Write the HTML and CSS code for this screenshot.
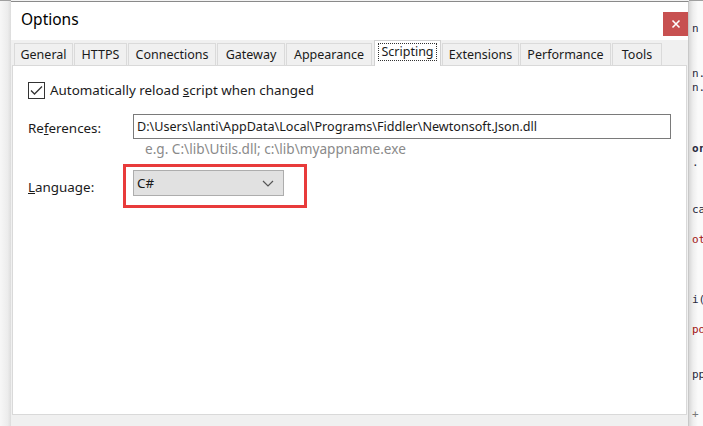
FILE: index.html
```html
<!DOCTYPE html>
<html>
<head>
<meta charset="utf-8">
<link rel="stylesheet" href="styles.css">
</head>
<body>
<div class="desktop">
  <div class="lshadow"></div>
  <div class="dialog">
    <div class="titlebar">
      <span class="title">Options</span>
      <div class="close"><svg width="10" height="10" viewBox="0 0 10 10"><path d="M1.5 1.5 L8.5 8.5 M8.5 1.5 L1.5 8.5" stroke="#fff" stroke-width="1.6"/></svg></div>
    </div>
    <div class="tabs">
      <div class="tab w-general">General</div>
      <div class="tab w-https">HTTPS</div>
      <div class="tab w-conn">Connections</div>
      <div class="tab w-gate">Gateway</div>
      <div class="tab w-app">Appearance</div>
      <div class="tab active w-script"><span class="focus">Scripting</span></div>
      <div class="tab w-ext">Extensions</div>
      <div class="tab w-perf">Performance</div>
      <div class="tab w-tools">Tools</div>
    </div>
    <div class="panel">
      <div class="check-row">
        <span class="checkbox"><svg width="13" height="11" viewBox="0 0 13 11"><path d="M1 5.5 L4.5 9 L12 1.5" fill="none" stroke="#333" stroke-width="1.3"/></svg></span>
        <span>Automatically reload <u>s</u>cript when changed</span>
      </div>
      <div class="field-row refs">
        <span class="label">Re<u>f</u>erences:</span>
        <div class="input">D:\Users\lanti\AppData\Local\Programs\Fiddler\Newtonsoft.Json.dll</div>
      </div>
      <div class="hint">e.g. C:\lib\Utils.dll; c:\lib\myappname.exe</div>
      <div class="field-row lang">
        <span class="label"><u>L</u>anguage:</span>
        <div class="select-wrap">
          <div class="select"><span>C#</span><svg width="12" height="7" viewBox="0 0 12 7"><path d="M1 1 L6 6 L11 1" fill="none" stroke="#555" stroke-width="1.2"/></svg></div>
        </div>
      </div>
    </div>
    <div class="footer"></div>
  </div>
  <div class="behind">
    <div class="frag f1"><span class="dk">n</span> <span class="red">=</span></div>
    <div class="frag f2 dk">n. U</div>
    <div class="frag f3 dk">n. U</div>
    <div class="frag f4 dk bold">or</div>
    <div class="frag f5 dk">. S</div>
    <div class="frag f6 dk">ca</div>
    <div class="frag f7 red">ot</div>
    <div class="frag f8 dk">i(</div>
    <div class="frag f9 red">po</div>
    <div class="frag f10 dk">pp</div>
    <div class="frag f11 gray">+</div>
  </div>
</div>
</body>
</html>
```

FILE: styles.css
```css
* { box-sizing: border-box; }
html, body { margin: 0; padding: 0; }
body {
  width: 703px;
  height: 426px;
  overflow: hidden;
  background: #f3f3f3;
  font-family: "Noto Sans", "Segoe UI", sans-serif;
  font-size: 12px;
  color: #1a1a1a;
}
.desktop {
  display: flex;
  height: 426px;
}
.lshadow {
  width: 11px;
  flex: none;
  background: linear-gradient(to right, #f7f7f7, #ececec 70%, #dcdcdc);
  border-top: 1px solid #a0a0a0;
}
.dialog {
  width: 678px;
  flex: none;
  display: flex;
  flex-direction: column;
  background: #f0f0f0;
  border-top: 1px solid #8a8a8a;
  margin-top: 1px;
  border-right: 1px solid #c8c8c8;
}
.titlebar {
  height: 38px;
  background: #fff;
  display: flex;
  align-items: center;
  justify-content: space-between;
  padding-left: 10px;
  padding-right: 0;
}
.title {
  font-size: 15.5px;
  color: #000;
  margin-top: -4px;
}
.close {
  width: 25px;
  height: 24px;
  background: #c75050;
  display: flex;
  align-items: center;
  justify-content: center;
  margin-top: 5px;
}
.tabs {
  display: flex;
  align-items: flex-end;
  height: 25px;
  padding-left: 3px;
  background: #f0f0f0;
  font-size: 12.5px;
}
.tab {
  height: 22px;
  border: 1px solid #dadada;
  border-bottom: none;
  margin-right: 1px;
  display: flex;
  align-items: center;
  justify-content: center;
  color: #1a1a1a;
  background: #f0f0f0;
  white-space: nowrap;
}
.tab.active {
  height: 26px;
  background: #fff;
  border-color: #d2d2d2;
  margin-bottom: -1px;
  position: relative;
  z-index: 1;
  align-items: flex-start;
  padding-top: 2px;
}
.focus {
  border: 1px dotted #333;
  padding: 0 2px;
  line-height: 16px;
}
.w-general { width: 59px; }
.w-https { width: 53px; }
.w-conn { width: 88px; }
.w-gate { width: 68px; }
.w-app { width: 86px; }
.w-script { width: 67px; margin-left: 1px; }
.w-ext { width: 77px; }
.w-perf { width: 91px; }
.w-tools { width: 50px; }
.panel {
  height: 350px;
  margin: 0 1px 0 1px;
  background: #fff;
  border: 1px solid #d9d9d9;
  padding: 14px 0 0 15px;
  display: flex;
  flex-direction: column;
}
.check-row {
  display: flex;
  align-items: center;
  gap: 5px;
  height: 20px;
  font-size: 13.4px;
}
.checkbox {
  width: 17px;
  height: 17px;
  border: 1px solid #333;
  display: flex;
  align-items: center;
  justify-content: center;
}
.field-row {
  display: flex;
  align-items: center;
  font-size: 13.4px;
}
.label { width: 105px; padding-top: 2px; }
.refs { margin-top: 14px; }
.input {
  width: 538px;
  height: 25px;
  border: 1px solid #7a7a7a;
  padding-left: 3px;
  display: flex;
  align-items: center;
  font-size: 12.6px;
}
.hint {
  margin-top: 1px;
  padding-left: 117px;
  color: #8a8a8a;
  font-size: 13.6px;
  line-height: 17px;
}
.lang { margin-top: 7px; }
.select-wrap {
  margin-left: -10px;
  border: 3px solid #e83b3b;
  padding: 3px 20px 9px 7px;
}
.select {
  width: 151px;
  height: 26px;
  background: #e1e1e1;
  border: 1px solid #adadad;
  display: flex;
  align-items: center;
  justify-content: space-between;
  padding: 0 9px 0 3px;
}
.footer {
  flex: 1;
  background: #f0f0f0;
}
.behind {
  flex: 1;
  background: linear-gradient(to right, #d8d8d8, #eeeeee 4px, #fafafa 9px);
  display: flex;
  flex-direction: column;
  padding-left: 3px;
  font-size: 11px;
  font-family: "DejaVu Sans Mono", monospace;
  white-space: nowrap;
  overflow: hidden;
  border-top: 1px solid #a0a0a0;
}
.frag { height: 12px; line-height: 12px; }
.dk { color: #2a2a40; }
.red { color: #a31515; }
.gray { color: #777; }
.bold { font-weight: bold; }
.f1 { margin-top: 22px; }
.f2 { margin-top: 33px; }
.f3 { margin-top: 2px; }
.f4 { margin-top: 49px; }
.f5 { margin-top: 2px; }
.f6 { margin-top: 35px; }
.f7 { margin-top: 18px; }
.f8 { margin-top: 48px; }
.f9 { margin-top: 18px; }
.f10 { margin-top: 33px; }
.f11 { margin-top: 28px; }
```
